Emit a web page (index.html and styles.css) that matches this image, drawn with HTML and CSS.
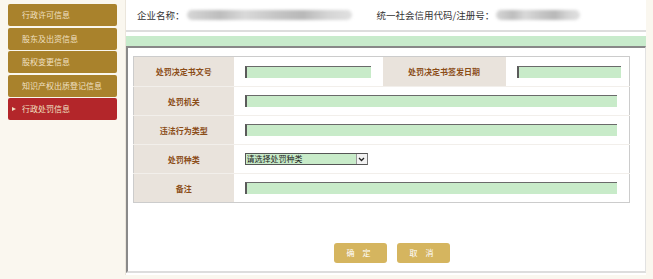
FILE: index.html
```html
<!DOCTYPE html>
<html>
<head>
	<meta charset="utf-8">
	<title>行政处罚信息</title>
	<link rel="stylesheet" href="styles.css">
</head>
<body>
	<div id="wrap">
		<ul id="side">
			<li><a href="#">行政许可信息</a></li>
			<li><a href="#">股东及出资信息</a></li>
			<li><a href="#">股权变更信息</a></li>
			<li><a href="#">知识产权出质登记信息</a></li>
			<li class="on"><a href="#">行政处罚信息</a></li>
		</ul>

		<div id="main">
			<div id="main_head">
				<span class="head_label">企业名称：</span>
				<span class="blur blur_name"></span>
				<span class="head_label head_code">统一社会信用代码/注册号：</span>
				<span class="blur blur_code"></span>
			</div>
			<div id="main_bar"></div>

			<div id="frame">
				<table id="form_table">
					<tr class="row_first">
						<th class="col_a">处罚决定书文号</th>
						<td class="col_b"><input type="text" class="txt txt_short"></td>
						<th class="col_c">处罚决定书签发日期</th>
						<td class="col_d"><input type="text" class="txt txt_date"></td>
					</tr>
					<tr>
						<th>处罚机关</th>
						<td colspan="3"><input type="text" class="txt txt_long"></td>
					</tr>
					<tr>
						<th>违法行为类型</th>
						<td colspan="3"><input type="text" class="txt txt_long"></td>
					</tr>
					<tr>
						<th>处罚种类</th>
						<td colspan="3">
							<span class="pick">
								<select class="pick_sel">
									<option>请选择处罚种类</option>
								</select>
								<span class="pick_btn">
									<svg width="7" height="5" viewBox="0 0 7 5"><path d="M1 1 L3.5 3.5 L6 1" fill="none" stroke="#222" stroke-width="1.3"/></svg>
								</span>
							</span>
						</td>
					</tr>
					<tr class="row_last">
						<th>备注</th>
						<td colspan="3"><input type="text" class="txt txt_long"></td>
					</tr>
				</table>

				<div id="btns">
					<a href="#" class="btn">确 定</a>
					<a href="#" class="btn">取 消</a>
				</div>
			</div>
		</div>
	</div>
</body>
</html>
```

FILE: styles.css
```css
* {
	margin: 0;
	padding: 0;
	list-style: none;
	border: none;
	box-sizing: border-box;
}

body {
	background: #faf7ef;
	font-family: "Noto Sans CJK SC", "Noto Sans", sans-serif;
	font-size: 11px;
	color: #333;
}

#wrap {
	display: flex;
	width: 653px;
	height: 279px;
}

/* 左侧菜单 */
#side {
	width: 125px;
	padding: 4px 8px 0 8px;
	flex-shrink: 0;
}

#side li {
	height: 22px;
	margin-bottom: 1.5px;
	background: #a9822c;
	border-radius: 2px;
}

#side li a {
	display: block;
	height: 100%;
	line-height: 22px;
	padding-left: 14px;
	color: #f0e0c2;
	font-size: 8px;
	text-decoration: none;
}

#side li.on {
	background: #b3262a;
}

#side li.on a {
	padding-left: 4px;
}

#side li.on a:before {
	content: "";
	display: inline-block;
	width: 0;
	height: 0;
	border-left: 4px solid #f0e0c2;
	border-top: 2.5px solid transparent;
	border-bottom: 2.5px solid transparent;
	margin-right: 6px;
	vertical-align: 1px;
}

/* 右侧内容 */
#main {
	width: 521px;
	height: 275px;
	background: #fff;
	border-left: 1px solid #ebe6dc;
}

#main_head {
	height: 32px;
	display: flex;
	align-items: center;
	padding: 0 0 1px 11px;
	border-bottom: 2px solid #ddd;
}

.head_label {
	font-size: 9.5px;
	color: #333;
}

.head_code {
	margin-left: 25px;
}

.blur {
	display: inline-block;
	height: 10px;
	border-radius: 5px;
	filter: blur(1.5px);
	background: linear-gradient(90deg, #d6d6d6 0%, #bdbdbd 20%, #d9d9d9 35%, #c4c4c4 55%, #b8b8b8 70%, #d4d4d4 85%, #e0e0e0 100%);
}

.blur_name {
	width: 165px;
	margin-left: 2px;
}

.blur_code {
	width: 84px;
	margin-left: 2px;
}

#main_bar {
	height: 10px;
	margin-top: 4px;
	background: #c8ebcc;
}

#frame {
	height: 227px;
	border-top: 2px solid #888;
	border-left: 2px solid #8a8a8a;
	border-right: 1px solid #e2e2e2;
	border-bottom: 2px solid #ddd;
	padding: 8px 0 0 5px;
}

/* 表单 */
#form_table {
	width: 496px;
	border-collapse: collapse;
	border: 1px solid #ccc;
	table-layout: fixed;
}

#form_table tr {
	height: 29px;
	border-bottom: 1px solid #f2efeb;
}

#form_table tr.row_first {
	height: 30px;
}

#form_table tr.row_last {
	border-bottom: none;
}

#form_table th {
	background: #e9e3dc;
	color: #8b4d18;
	font-size: 8px;
	font-weight: bold;
	text-align: center;
}

#form_table td {
	padding-left: 11px;
}

.col_a { width: 100px; }
.col_b { width: 149px; }
.col_c { width: 123px; }
.col_d { width: 124px; }

.txt {
	display: block;
	height: 12px;
	background: #c8ebc9;
	border-top: 1px solid #6a6a6a;
	border-left: 2px solid #5a5a5a;
	outline: none;
}

.txt_short { width: 126px; }
.txt_date { width: 104px; }
.txt_long { width: 372px; }

.pick {
	display: flex;
	width: 123px;
	height: 12px;
	background: #c8ebc9;
	border: 1px solid #555;
	border-right-color: #777;
}

.pick_sel {
	flex: 1;
	appearance: none;
	-webkit-appearance: none;
	background: transparent;
	font-family: "Noto Sans CJK SC", sans-serif;
	font-size: 8px;
	line-height: 10px;
	height: 10px;
	padding-left: 1px;
	color: #222;
	outline: none;
}

.pick_btn {
	width: 11px;
	height: 10px;
	background: #f2f2f2;
	border-left: 1px solid #999;
	display: flex;
	align-items: center;
	justify-content: center;
}

/* 按钮 */
#btns {
	display: flex;
	gap: 10px;
	justify-content: center;
	padding-left: 5px;
	margin-top: 40px;
}

.btn {
	display: block;
	width: 53px;
	height: 20px;
	line-height: 20px;
	text-align: center;
	background: #d5b55f;
	border-radius: 3px;
	color: #fff;
	font-size: 8px;
	letter-spacing: 3px;
	text-decoration: none;
}
```
